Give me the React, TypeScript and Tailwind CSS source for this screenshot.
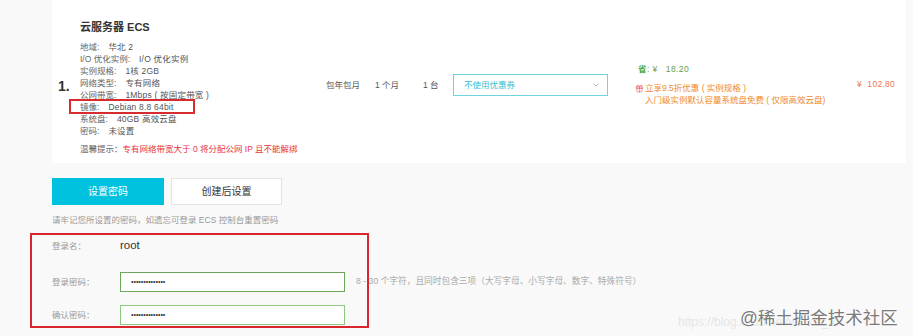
import React from 'react';
import { Gift, ChevronDown } from 'lucide-react';

const specs: [string, string][] = [
  ['地域:', '华北 2'],
  ['I/O 优化实例:', 'I/O 优化实例'],
  ['实例规格:', '1核 2GB'],
  ['网络类型:', '专有网络'],
  ['公网带宽:', '1Mbps ( 按固定带宽 )'],
  ['镜像:', 'Debian 8.8 64bit'],
  ['系统盘:', '40GB 高效云盘'],
  ['密码:', '未设置'],
];

const App: React.FC = () => {
  return (
    <div className="relative w-[913px] h-[336px] overflow-hidden bg-[#f9f9f9] font-['Liberation_Sans','Noto_Sans_CJK_SC',sans-serif] text-[8.5px] text-[#666]">
      {/* Order card */}
      <section className="ml-[52px] w-[854px] h-[163px] bg-white flex items-start">
        <div className="w-[28px] pl-[6px] pt-[77px] text-[14px] leading-[18px] font-bold text-[#333]">1.</div>

        <div className="w-[246px] pt-[18px]">
          <h2 className="text-[11px] leading-[18px] font-bold text-[#333]">云服务器 ECS</h2>
          <div className="mt-[5px]">
            {specs.map(([label, value]) => (
              <div key={label} className="relative h-[12px] leading-[12px] whitespace-nowrap">
                <span>{label}</span>
                <span className="ml-[9px] text-[#555] tracking-[0.2px]">{value}</span>
                {label === '镜像:' && (
                  <span className="absolute -left-[11px] -top-[2px] w-[126px] h-[15px] border-2 border-[#d62c2f]" />
                )}
              </div>
            ))}
          </div>
          <p className="mt-[6px] h-[12px] leading-[12px] whitespace-nowrap">
            温馨提示：<span className="text-[#e8343a]">专有网络带宽大于 0 将分配公网 IP 且不能解绑</span>
          </p>
        </div>

        <div className="mt-[74px] h-[22px] flex items-center text-[#555]">
          <span className="w-[49px]">包年包月</span>
          <span className="w-[48px]">1 个月</span>
          <span className="w-[30px]">1 台</span>
          <div className="w-[155px] h-[22px] border border-[#6fd3e0] flex items-center justify-between pl-[10px] pr-[7px]">
            <span className="text-[#3cc0d2]">不使用优惠券</span>
            <ChevronDown size={8} className="text-[#999]" />
          </div>
        </div>

        <div className="ml-[27px] w-[222px] mt-[63px] whitespace-nowrap">
          <div className="h-[12px] leading-[12px] pl-[3px] text-[#6a9d4a] tracking-[0.4px]">
            <span className="text-[#4ca93a] font-bold">省</span>: ¥&nbsp;&nbsp; 18.20
          </div>
          <div className="mt-[7px] h-[12px] leading-[12px] flex items-center text-[#f08a2c]">
            <Gift size={9} className="text-[#e8505b] mr-[1px]" strokeWidth={1.6} />
            立享9.5折优惠 ( 实例规格 )
          </div>
          <div className="h-[12px] leading-[12px] pl-[10px] text-[#f08a2c]">入门级实例默认容量系统盘免费 ( 仅限高效云盘)</div>
        </div>

        <div className="mt-[78px] h-[12px] leading-[12px] text-[#ea7552] whitespace-nowrap tracking-[0.3px]">¥&nbsp; 102.80</div>
      </section>

      {/* Password setting */}
      <section className="pl-[52px]">
        <div className="mt-[15px] flex gap-[7px]">
          <button className="w-[112px] h-[27px] bg-[#00c1de] text-white text-[10px]">设置密码</button>
          <button className="w-[111px] h-[27px] bg-white border border-[#e3e3e3] text-[#333] text-[10px]">创建后设置</button>
        </div>
        <p className="mt-[9px] h-[12px] leading-[12px] text-[#999]">请牢记您所设置的密码，如遗忘可登录 ECS 控制台重置密码</p>

        <div className="relative">
          <span className="absolute -left-[22px] -top-[3px] w-[339px] h-[95px] border-2 border-[#d9252b]" />
          <div className="mt-[10px] h-[20px] flex items-center">
            <span className="w-[68px] text-[#999]">登录名：</span>
            <span className="text-[11.5px] text-[#333]">root</span>
          </div>
          <div className="mt-[16px] h-[20px] flex items-center">
            <span className="w-[68px] text-[#999]">登录密码：</span>
            <div className="w-[225px] h-[20px] border border-[#6aa85c] bg-white flex items-center pl-[10px] text-[7px] text-[#333]">••••••••••••••</div>
            <span className="ml-[11px] text-[8.7px] text-[#aaa] whitespace-nowrap">8 - 30 个字符，且同时包含三项（大写字母、小写字母、数字、特殊符号）</span>
          </div>
          <div className="mt-[13px] h-[20px] flex items-center">
            <span className="w-[68px] text-[#999]">确认密码：</span>
            <div className="w-[225px] h-[20px] border border-[#8cc87e] bg-white flex items-center pl-[10px] text-[7px] text-[#333]">••••••••••••••</div>
          </div>
        </div>
      </section>

      {/* Watermark */}
      <div className="absolute left-[678px] top-[313px] text-[12px] text-[#e6e6e6] whitespace-nowrap">https://blog.csdn.net/weixin_43</div>
      <div className="absolute left-[740px] top-[307px] text-[17.5px] leading-[22px] text-[#7a7a7a] whitespace-nowrap [text-shadow:0_0_2px_#fff,0_0_2px_#fff]">@稀土掘金技术社区</div>
    </div>
  );
};

export default App;
